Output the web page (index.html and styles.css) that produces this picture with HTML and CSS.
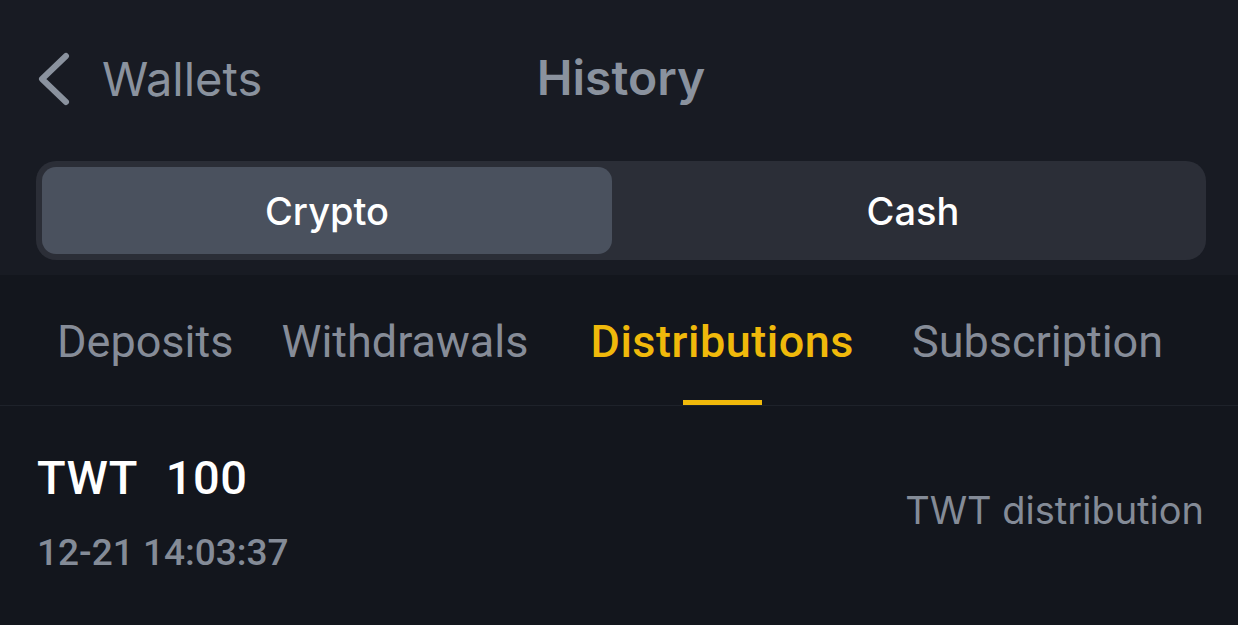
FILE: index.html
```html
<!DOCTYPE html>
<html>
<head>
<meta charset="utf-8">
<link rel="stylesheet" href="styles.css">
</head>
<body>
<div class="top">
  <header class="nav">
    <div class="back">
      <svg class="chev" width="36" height="54" viewBox="0 0 36 54"><path d="M30 4 L6 27 L30 50" fill="none" stroke="#8a929e" stroke-width="6" stroke-linecap="round" stroke-linejoin="round"/></svg>
      <span class="back-label">Wallets</span>
    </div>
    <h1 class="title">History</h1>
  </header>
  <div class="seg">
    <div class="seg-item active">Crypto</div>
    <div class="seg-item rest">Cash</div>
  </div>
</div>
<nav class="tabs">
  <div class="tab">Deposits</div>
  <div class="tab">Withdrawals</div>
  <div class="tab active">Distributions<span class="bar"></span></div>
  <div class="tab">Subscription</div>
</nav>
<div class="row">
  <div class="left">
    <div class="amount"><span>TWT</span><span>100</span></div>
    <div class="date">12-21 14:03:37</div>
  </div>
  <div class="desc">TWT distribution</div>
</div>
</body>
</html>
```
FILE: styles.css
```css
html, body { margin: 0; padding: 0; }
body {
  width: 1238px;
  height: 625px;
  overflow: hidden;
  background: #13161d;
  font-family: Roboto, "Noto Sans", sans-serif;
}
.top {
  background: #181b23;
  padding: 0 32px 15px 36px;
}
.nav {
  position: relative;
  height: 161px;
  display: flex;
  align-items: flex-start;
}
.back {
  display: flex;
  align-items: center;
  margin-top: 50px;
}
.back-label {
  margin-left: 30px;
  font-family: Inter, Roboto, sans-serif;
  font-size: 47px;
  color: #8a929e;
}
.title {
  position: absolute;
  left: 0; right: 0;
  top: 48px;
  margin: 0;
  text-align: center;
  font-family: Inter, Roboto, sans-serif;
  font-size: 48px;
  font-weight: 600;
  color: #8a929e;
  pointer-events: none;
}
.seg {
  display: flex;
  background: #2b2e37;
  border-radius: 20px;
  padding: 6px;
  height: 87px;
}
.seg-item {
  display: flex;
  align-items: center;
  justify-content: center;
  border-radius: 14px;
  color: #fff;
  font-family: Inter, Roboto, sans-serif;
  font-size: 38px;
  font-weight: 500;
}
.seg-item.active { width: 570px; flex: none; background: #4a515e; }
.seg-item.rest { flex: 1; padding-left: 14px; }
.tabs {
  display: flex;
  height: 131px;
  border-bottom: 1px solid #1e222a;
  padding-left: 57px;
  box-sizing: border-box;
}
.tab {
  position: relative;
  font-size: 45px;
  color: #868c98;
  padding-top: 40px;
  margin-right: 48px;
}
.tab:nth-child(2) { margin-right: 62px; }
.tab:nth-child(3) { margin-right: 58px; }
.tab.active { color: #f0b90b; font-weight: 500; letter-spacing: 0.5px; }
.bar {
  position: absolute;
  left: 50%;
  bottom: 0;
  width: 79px;
  height: 5px;
  margin-left: -39px;
  background: #f0b90b;
}
.row {
  display: flex;
  justify-content: space-between;
  align-items: center;
  padding: 44px 34px 0 37px;
}
.amount {
  display: flex;
  gap: 28px;
  font-size: 47px;
  font-weight: 500;
  letter-spacing: 0.5px;
  color: #fff;
}
.date {
  margin-top: 26px;
  font-size: 37px;
  font-weight: 500;
  color: #848b97;
}
.desc {
  font-family: Inter, Roboto, sans-serif;
  font-size: 38px;
  color: #848b97;
  margin-top: -4px;
}
```
